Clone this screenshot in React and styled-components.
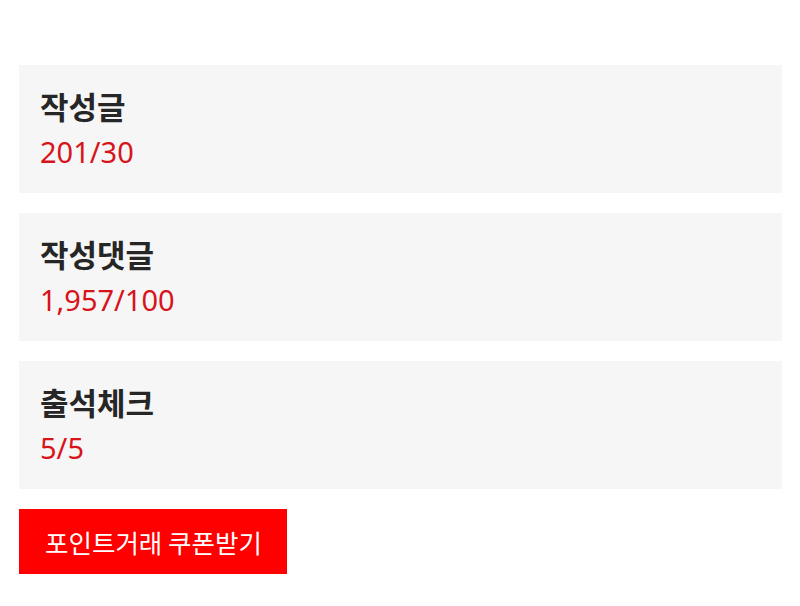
import React from "react";
import styled, { createGlobalStyle } from "styled-components";

const Global = createGlobalStyle`
  html, body { margin: 0; padding: 0; background: #fff; }
  body { font-family: "Noto Sans CJK KR", "Noto Sans", sans-serif; }
`;

const Page = styled.div`
  padding: 65px 18px 0 19px;
  display: flex;
  flex-direction: column;
  gap: 20px;
`;

const Card = styled.div`
  background: #f6f6f6;
  height: 128px;
  box-sizing: border-box;
  padding: 20px 21px 0 21px;
  display: flex;
  flex-direction: column;
`;

const Title = styled.div`
  font-size: 31px;
  font-weight: 700;
  color: #262626;
  line-height: 42px;
`;

const Value = styled.div`
  font-family: "Noto Sans", "Noto Sans CJK KR", sans-serif;
  font-size: 29px;
  color: #d7141a;
  line-height: 40px;
  margin-top: 5px;
`;

const Button = styled.button`
  align-self: flex-start;
  background: #ff0000;
  color: #fff;
  border: none;
  height: 65px;
  padding: 0 25px 0 26px;
  font-family: "Noto Sans CJK KR", sans-serif;
  font-size: 25.5px;
  cursor: pointer;
`;

const items = [
  { title: "작성글", value: "201/30" },
  { title: "작성댓글", value: "1,957/100" },
  { title: "출석체크", value: "5/5" },
];

export default function App() {
  return (
    <>
      <Global />
      <Page>
        {items.map((it) => (
          <Card key={it.title}>
            <Title>{it.title}</Title>
            <Value>{it.value}</Value>
          </Card>
        ))}
        <Button>포인트거래 쿠폰받기</Button>
      </Page>
    </>
  );
}
